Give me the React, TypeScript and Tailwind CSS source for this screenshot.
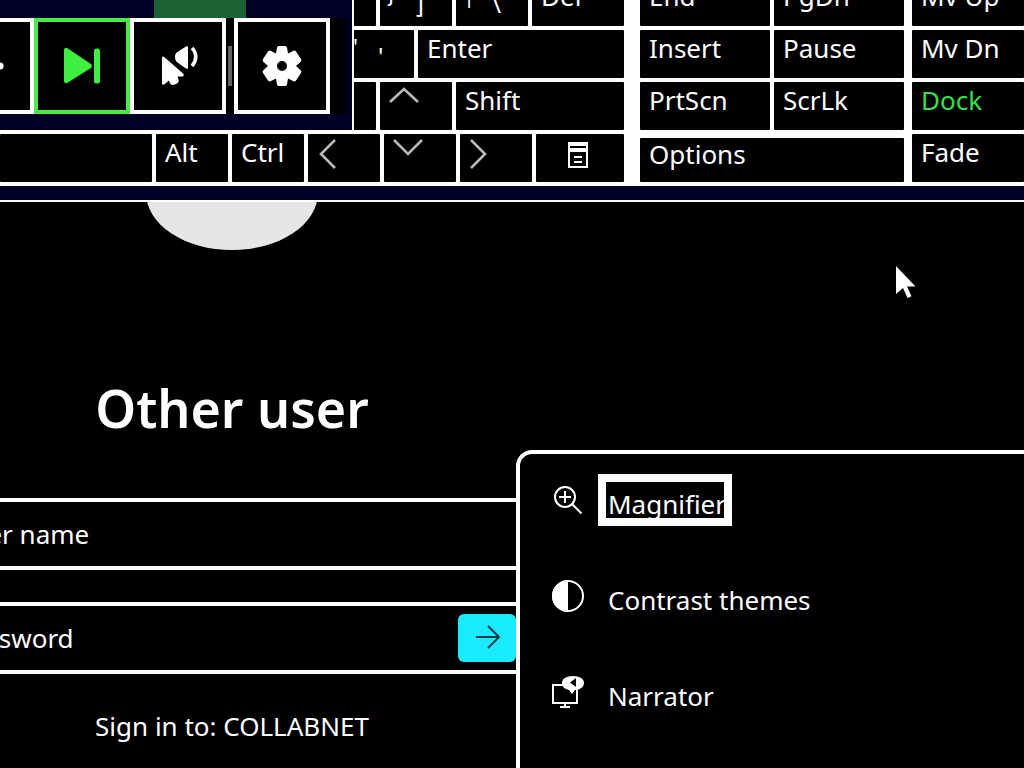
import { ReactNode } from "react";

interface KeyProps {
  label?: string;
  shifted?: string;
  base?: string;
  icon?: ReactNode;
  className: string;
}

function Key({ label, shifted, base, icon, className }: KeyProps) {
  return (
    <button
      aria-label={icon ? label : undefined}
      className={`flex shrink-0 items-start overflow-hidden rounded-[1px] bg-black text-left text-[26px] whitespace-nowrap ${className}`}
    >
      {icon}
      {!icon && label && <span className="pl-[9px]">{label}</span>}
      {shifted && <span className="w-9 pl-[7px] text-[22px] leading-8">{shifted}</span>}
      {base && <span className="pt-2 text-[24px]">{base}</span>}
    </button>
  );
}

function Arrow({ d }: { d: string }) {
  return (
    <svg className="size-12" viewBox="0 0 48 48" fill="none" stroke="#b8b8b8" strokeWidth="2.6">
      <path d={d} />
    </svg>
  );
}

function MenuIcon() {
  return (
    <svg className="h-12 w-[88px]" viewBox="0 0 88 48" fill="none" stroke="#fff" strokeWidth="2">
      <path d="M32 8h20v26H32z" fill="#fff" stroke="none" />
      <path d="M34 13h16" stroke="#000" />
      <path d="M34 18h16v14H34z" fill="#000" stroke="none" />
      <path d="M38 23h8M38 28h8" />
    </svg>
  );
}

const MAIN_ROWS: KeyProps[][] = [
  [
    { className: "h-12 w-[72px]" },
    { shifted: "}", base: "]", className: "h-12 w-[72px] leading-9" },
    { shifted: "|", base: "\\", className: "h-12 w-[72px] leading-9" },
    { label: "Del", className: "h-12 w-[92px] leading-9" },
  ],
  [
    { shifted: '"', base: "'", className: "h-12 w-[72px] leading-9" },
    { label: "Enter", className: "h-12 w-[206px] leading-9" },
  ],
  [
    { className: "h-12 w-[72px]" },
    { label: "Up", icon: <Arrow d="M10 20L24 7l14 13" />, className: "h-12 w-[72px]" },
    { label: "Shift", className: "h-12 w-[168px] leading-9" },
  ],
  [
    { className: "h-12 w-[152px]" },
    { label: "Alt", className: "h-12 w-[72px] leading-9" },
    { label: "Ctrl", className: "h-12 w-[72px] leading-9" },
    { label: "Left", icon: <Arrow d="M27 6L13 20l14 14" />, className: "h-12 w-[72px]" },
    { label: "Down", icon: <Arrow d="M10 6l14 14L38 6" />, className: "h-12 w-[72px]" },
    { label: "Right", icon: <Arrow d="M11 6l14 14-14 14" />, className: "h-12 w-[72px]" },
    { label: "Menu", icon: <MenuIcon />, className: "h-12 w-[88px]" },
  ],
];

const NAV_KEYS = ["End", "PgDn", "Insert", "Pause", "PrtScn", "ScrLk"];

function Toolbar() {
  return (
    <div
      role="toolbar"
      className="absolute top-0 left-0 flex h-[130px] w-[354px] flex-col overflow-hidden border-r-2 border-white bg-[#000026]"
    >
      <div className="h-[18px] pl-[154px]">
        <div className="h-full w-[92px] bg-[#1d6234]" />
      </div>
      <div className="flex">
        <button aria-label="Pointer" className="flex h-24 w-[34px] items-center border-4 border-l-0 border-white bg-black">
          <svg className="h-6 w-2" viewBox="0 0 8 24" fill="#fff">
            <circle cx="0" cy="12" r="3.6" />
          </svg>
        </button>
        <button aria-label="Skip" className="h-24 w-24 border-4 border-[#48ec48] bg-black">
          <svg className="size-full" viewBox="0 0 88 88" fill="#40f040">
            <path d="M26 28.500c0-2.500 1.500-3.500 3.500-2.300l23 15.500c1.900 1.300 1.900 3.300 0 4.600l-23 14.500c-2 1.200-3.500.2-3.500-2.300z" />
            <rect x="56" y="26.500" width="6" height="35" rx="2.500" />
          </svg>
        </button>
        <button aria-label="Click sounds" className="h-24 w-24 border-4 border-white bg-black">
          <svg className="size-full" viewBox="0 0 88 88" fill="#fff">
            <path d="M28 36.500c0-2 1.200-2.500 2.500-1.200L49 51.500c1.500 1.500.8 3-1 3h-4.500l1 3c.7 2-.2 3.500-2 4.300l-2 .8c-2 .8-3.800.2-4.600-1.600l-1-2.500-4 3.500c-1.800 1.500-2.900.8-2.900-1z" />
            <path d="M41 34.500c0-2 .8-3.500 2.500-4.500l8.500-5.500c1.400-.8 2 0 2 1v20c0 1.300-1 1.700-2 1l-8.500-6c-1.700-1-2.500-3-2.500-6z" />
            <path d="M58 26c5 5 5 12.500 0 18" fill="none" stroke="#fff" strokeWidth="3.600" />
          </svg>
        </button>
        <div className="flex h-24 w-2 items-center justify-center bg-black">
          <div className="h-10 w-1 bg-[#606060]" />
        </div>
        <button aria-label="Settings" className="h-24 w-24 border-4 border-white bg-black">
          <svg className="size-full" viewBox="-44 -44 88 88" fill="#fff">
            <path
              fillRule="evenodd"
              d="M-5-18.500Q-4.700-20-3-20H3Q4.700-20 5-18.500L6-12.500 11-15Q13-16 14-14.500L19-7Q20-5 18.500-4L14 0 18.500 4Q20 5 19 7L14 14.500Q13 16 11 15L6 12.500 5 18.500Q4.700 20 3 20H-3Q-4.700 20-5 18.500L-6 12.500-11 15Q-13 16-14 14.500L-19 7Q-20 5-18.500 4L-14 0-18.500-4Q-20-5-19-7L-14-14.500Q-13-16-11-15L-6-12.500ZM0-5A5 5 0 1 0 0 5A5 5 0 1 0 0-5Z"
            />
          </svg>
        </button>
        <div className="w-[22px] bg-gradient-to-r from-black to-[#000026]" />
      </div>
    </div>
  );
}

function Keyboard() {
  return (
    <div className="relative flex h-[186px] items-end overflow-hidden bg-white pb-1">
      <div className="flex w-[624px] shrink-0 flex-col gap-1">
        {MAIN_ROWS.map((row, i) => (
          <div key={i} className="flex justify-end gap-1">
            {row.map((key, j) => (
              <Key key={j} {...key} />
            ))}
          </div>
        ))}
      </div>
      <div className="ml-4 w-[264px] shrink-0">
        <div className="grid grid-cols-2 gap-1">
          {NAV_KEYS.map((label) => (
            <Key key={label} label={label} className="h-12 leading-9" />
          ))}
        </div>
        <Key label="Options" className="mt-2 h-11 w-full leading-8" />
      </div>
      <div className="ml-2 flex flex-1 flex-col gap-1">
        <Key label="Mv Up" className="h-12 leading-9" />
        <Key label="Mv Dn" className="h-12 leading-9" />
        <Key label="Dock" className="h-12 leading-9 text-[#35e04a]" />
        <Key label="Fade" className="h-12 leading-9" />
      </div>
      <Toolbar />
    </div>
  );
}

function SignIn() {
  return (
    <section className="w-[516px] shrink-0 overflow-hidden">
      <div className="flex flex-col items-center pr-[52px]">
        <svg className="h-12 w-[172px]" viewBox="0 0 172 48" fill="#e6e6e6">
          <ellipse cx="86" cy="-9" rx="86" ry="57" />
        </svg>
        <h1 className="mt-[122px] text-[52px] leading-[72px] font-semibold">Other user</h1>
      </div>
      <form className="mt-[54px] -ml-14" onSubmit={(e) => e.preventDefault()}>
        <input
          type="text"
          aria-label="User name"
          placeholder="User name"
          className="block h-[72px] w-full border-y-4 border-white bg-black pl-3 text-[26px] placeholder:text-white"
        />
        <div className="mt-8 flex h-[72px] items-center border-y-4 border-white">
          <input
            type="password"
            aria-label="Password"
            placeholder="Password"
            className="h-16 min-w-0 flex-1 bg-black pl-3 text-[26px] placeholder:text-white"
          />
          <button
            type="submit"
            aria-label="Submit"
            className="flex h-12 w-[58px] items-center justify-center rounded-md bg-[#1aebff]"
          >
            <svg className="size-8" viewBox="0 0 32 32" fill="none" stroke="#063c46" strokeWidth="2">
              <path d="M5 15h23M17 4l11 11-11 11" />
            </svg>
          </button>
        </div>
      </form>
      <p className="mt-[34px] pr-[52px] text-center text-[26px] leading-9 whitespace-nowrap">
        Sign in to: COLLABNET
      </p>
    </section>
  );
}

function MagnifierIcon() {
  return (
    <svg className="size-8" viewBox="0 0 32 32" fill="none" stroke="#fff" strokeWidth="2">
      <circle cx="13" cy="13" r="10" />
      <path d="M13 7v12M7 13h12M20 20l9.500 9.500" />
    </svg>
  );
}

function ContrastIcon() {
  return (
    <svg className="size-8" viewBox="0 0 32 32" fill="none" stroke="#fff" strokeWidth="2">
      <circle cx="16" cy="16" r="15" />
      <path d="M16 0a16 16 0 0 0 0 32z" fill="#fff" stroke="none" />
    </svg>
  );
}

function NarratorIcon() {
  return (
    <svg className="size-8" viewBox="0 0 32 32" fill="none" stroke="#fff" strokeWidth="2">
      <path d="M11 9H1v18h24V12M13 27v4M8 31h10" />
      <path d="M21 0c7 0 11 3 11 7s-4 7-9 7l-3 4-3-4c-4-1-7-3-7-7s4-7 11-7z" fill="#fff" stroke="none" />
      <path d="M24 2v9l-6-4.500z" fill="#000" stroke="none" />
    </svg>
  );
}

const ACCESS_ITEMS = [
  { name: "Magnifier", icon: <MagnifierIcon />, focused: true },
  { name: "Contrast themes", icon: <ContrastIcon />, focused: false },
  { name: "Narrator", icon: <NarratorIcon />, focused: false },
];

function AccessibilityPanel() {
  return (
    <aside className="mt-[248px] flex flex-1 flex-col gap-11 rounded-tl-2xl border-t-4 border-l-4 border-white pt-5 pl-8">
      {ACCESS_ITEMS.map((item) => (
        <button key={item.name} className="flex h-[52px] items-center text-left text-[26px] leading-9">
          {item.icon}
          <span
            className={`ml-[14px] h-[52px] overflow-hidden border-8 pt-1 pl-[2px] whitespace-nowrap ${
              item.focused ? "w-[134px] border-white" : "border-transparent"
            }`}
          >
            {item.name}
          </span>
        </button>
      ))}
    </aside>
  );
}

export default function App() {
  return (
    <div className="relative flex min-h-screen flex-col overflow-hidden bg-black font-['Noto_Sans','Open_Sans',sans-serif] text-white">
      <Keyboard />
      <div className="h-4 border-b-2 border-white bg-[#000026]" />
      <main className="flex flex-1">
        <SignIn />
        <AccessibilityPanel />
      </main>
      <svg className="absolute top-[266px] left-[895px] h-8 w-5" viewBox="0 0 20 32" fill="#fff">
        <path d="M1 0v28l7-6 4.500 10 4-1.800L12 20.500h8.500z" />
      </svg>
    </div>
  );
}
